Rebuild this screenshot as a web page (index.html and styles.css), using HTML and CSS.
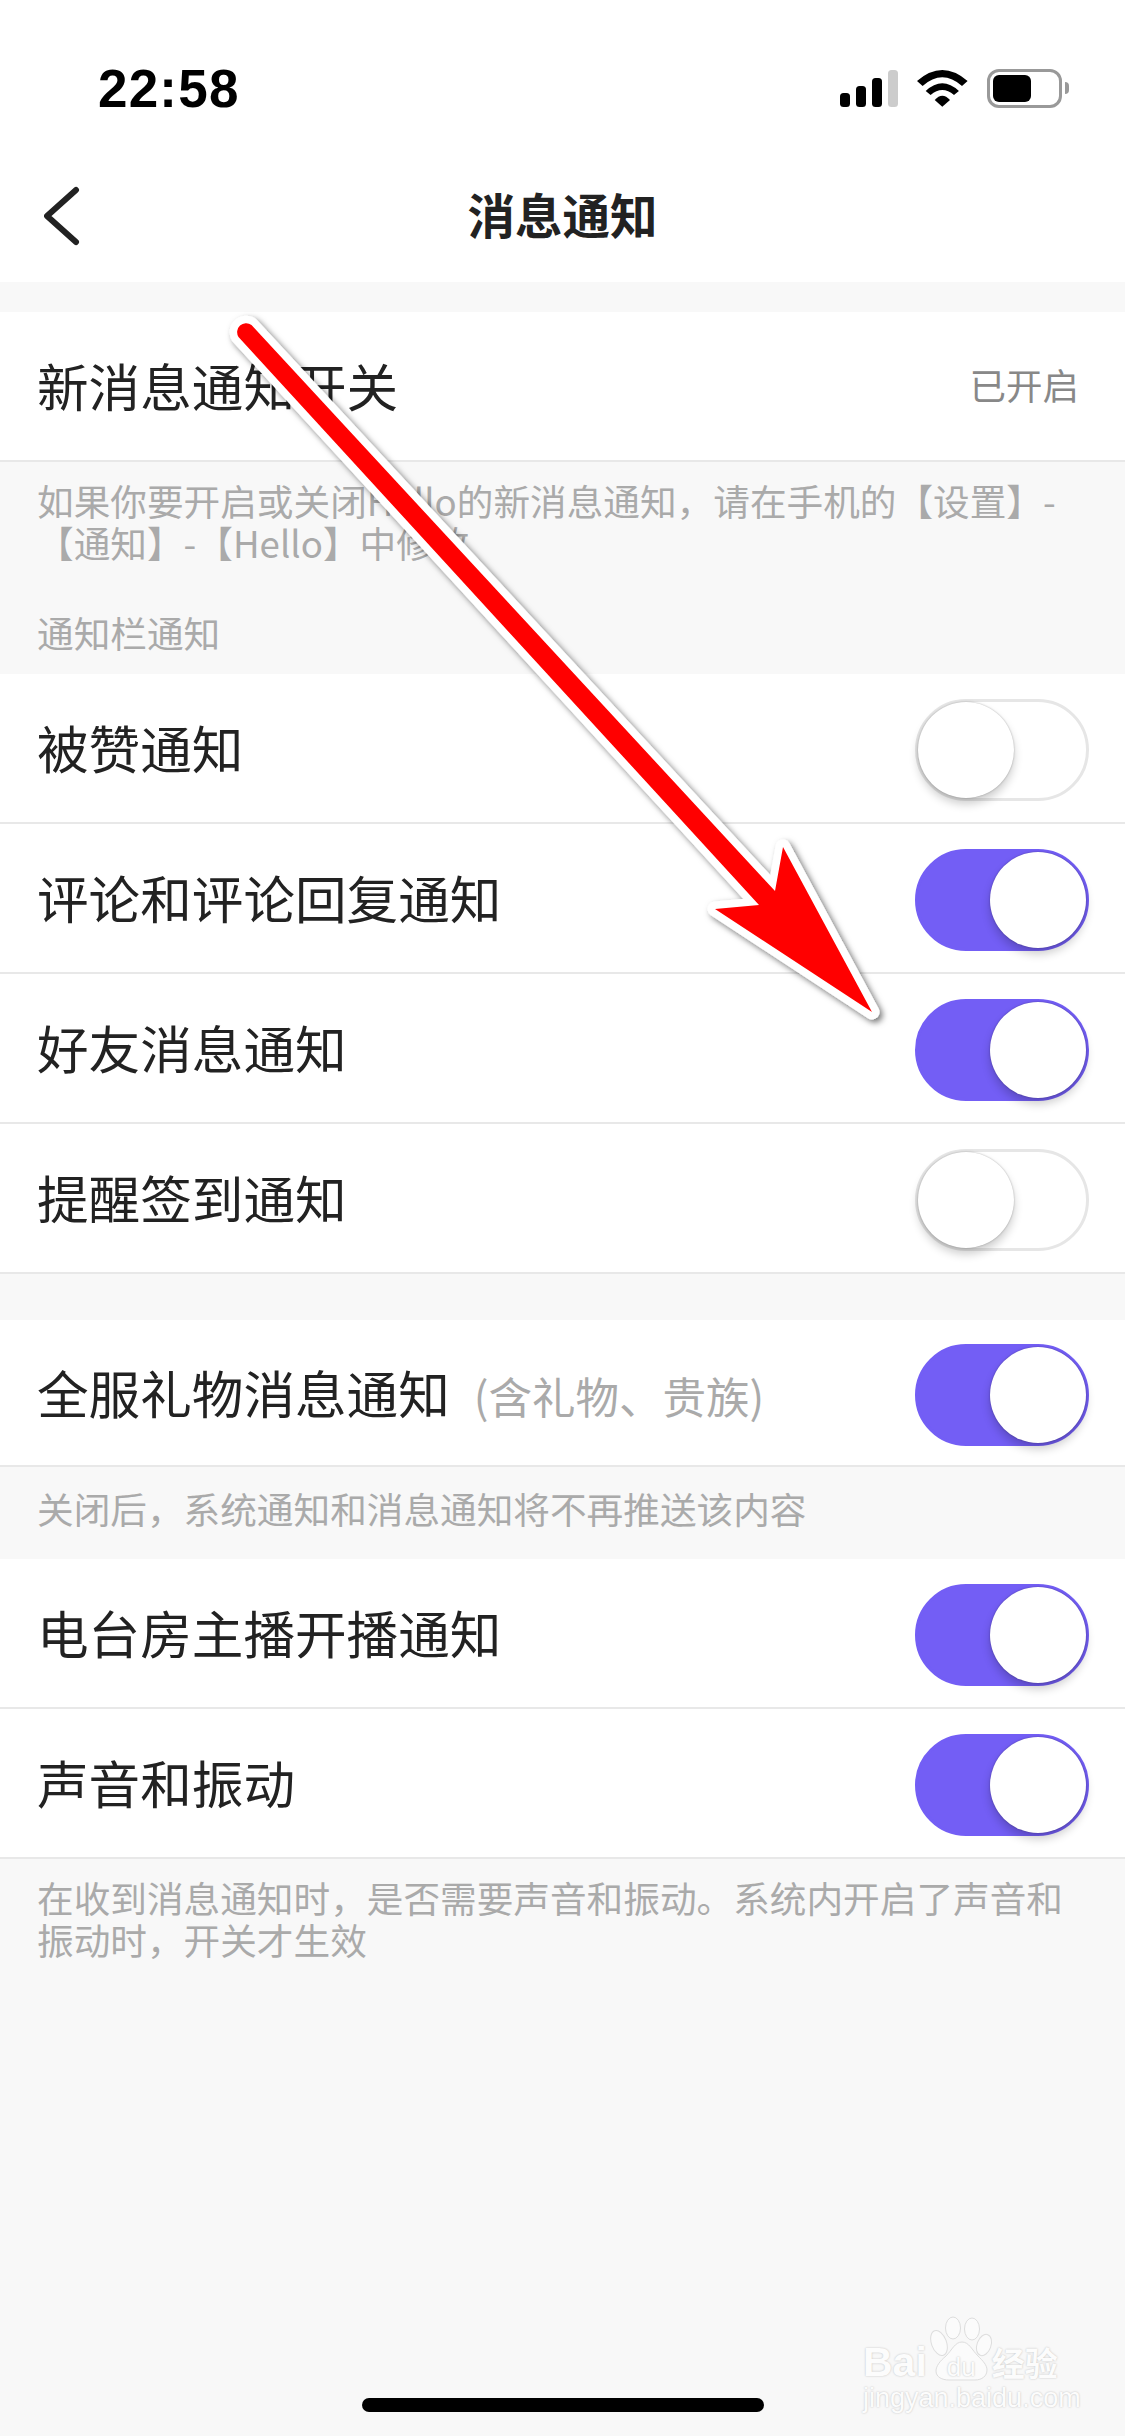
FILE: index.html
```html
<!DOCTYPE html>
<html lang="zh-CN">

<head>
  <meta charset="UTF-8">
  <title>消息通知</title>
  <link rel="stylesheet" href="styles.css">
</head>

<body>

  <div class="status">
    <span class="time">22:58</span>
    <div class="status-icons">
      <svg width="58" height="37" viewBox="0 0 58 37">
        <rect x="0" y="23" width="10" height="14" rx="3.5"/>
        <rect x="16" y="16" width="10" height="21" rx="3.5"/>
        <rect x="32" y="8" width="10" height="29" rx="3.5"/>
        <rect x="48" y="0" width="10" height="37" rx="3.5" fill="#ccc"/>
      </svg>
      <svg width="51" height="37" viewBox="0 0 51 37">
        <path d="M0 11Q25.3 -11 50.6 11L45 16Q25.3 -1.4 5.6 16Z"/>
        <path d="M8.7 21Q25.3 5.6 41.9 21L37 25Q25.3 15 13.6 25Z"/>
        <path d="M17.7 30Q25.3 21.4 33 30L25.3 36.7Z"/>
      </svg>
      <div class="battery"><div class="battery-level"></div></div>
    </div>
  </div>

  <header class="nav">
    <svg class="back" width="36" height="60" viewBox="0 0 36 60">
      <path d="M32 4L3 30L32 56"/>
    </svg>
    <h1>消息通知</h1>
  </header>

  <main>
    <div class="row first">
      <span class="label">新消息通知开关</span>
      <span class="state">已开启</span>
    </div>
    <p class="note note-top">如果你要开启或关闭Hello的新消息通知，请在手机的【设置】-<br>【通知】-【Hello】中修改</p>
    <p class="section">通知栏通知</p>

    <div class="row"><span class="label">被赞通知</span><span class="toggle"></span></div>
    <div class="row"><span class="label">评论和评论回复通知</span><span class="toggle on"></span></div>
    <div class="row"><span class="label">好友消息通知</span><span class="toggle on"></span></div>
    <div class="row"><span class="label">提醒签到通知</span><span class="toggle"></span></div>

    <div class="row gap">
      <span class="label">全服礼物消息通知<small>(含礼物、贵族)</small></span>
      <span class="toggle on"></span>
    </div>
    <p class="note note-single">关闭后，系统通知和消息通知将不再推送该内容</p>

    <div class="row"><span class="label">电台房主播开播通知</span><span class="toggle on"></span></div>
    <div class="row"><span class="label">声音和振动</span><span class="toggle on"></span></div>
    <p class="note note-last">在收到消息通知时，是否需要声音和振动。系统内开启了声音和<br>振动时，开关才生效</p>
  </main>

  <div class="home-bar"></div>

  <!-- annotation drawn over the page -->
  <svg class="arrow" width="1125" height="1100" viewBox="0 0 1125 1100">
    <defs>
      <filter id="arrow-shadow" x="-10%" y="-10%" width="120%" height="120%">
        <feDropShadow dx="3" dy="3" stdDeviation="3" flood-color="#000" flood-opacity="0.55"/>
      </filter>
    </defs>
    <path filter="url(#arrow-shadow)" d="M238.5 337A9 9 0 0 1 251.5 325L775 891L783 847L872 1012L715 909L759 905Z"/>
  </svg>

  <div class="mark">
    <svg class="paw" width="64" height="66" viewBox="0 0 64 66">
      <ellipse cx="9" cy="27" rx="7.5" ry="13" transform="rotate(-20 9 27)"/>
      <ellipse cx="23" cy="12" rx="7.5" ry="11"/>
      <ellipse cx="42" cy="13" rx="7.5" ry="11"/>
      <ellipse cx="54" cy="29" rx="7" ry="11" transform="rotate(20 54 29)"/>
      <path d="M32 26C25 26 22 34 16 40C10 45 6 50 6 55C6 61 12 64 19 64L45 64C52 64 57 60 57 54C57 49 53 45 48 40C42 34 39 26 32 26Z"/>
    </svg>
    <div class="mark-top"><span class="mark-bai">Bai</span><span class="mark-du">du</span><span class="mark-cn">经验</span></div>
    <div class="mark-url">jingyan.baidu.com</div>
  </div>

</body>

</html>
```

FILE: styles.css
```css
html {
  background: #f8f8f8;
}

body {
  color: #222;
  font-family: "Noto Sans CJK SC", "Liberation Sans", sans-serif;
  height: 2436px;
  margin: 0;
  overflow: hidden;
  position: relative;
  width: 1125px;
}

.status {
  align-items: center;
  background: #fff;
  box-sizing: border-box;
  display: flex;
  height: 150px;
  justify-content: space-between;
  padding: 26px 56px 0 98px;
}

.time {
  color: #000;
  font-family: "Liberation Sans", sans-serif;
  font-size: 53px;
  font-weight: 700;
  letter-spacing: 1.2px;
}

.status-icons {
  align-items: center;
  display: flex;
  gap: 19px;
}

.status-icons svg {
  display: block;
}

.battery {
  border: 3px solid #999;
  border-radius: 12px;
  box-sizing: border-box;
  height: 39px;
  margin-right: 7px;
  padding: 3px;
  position: relative;
  width: 75px;
}

.battery::after {
  background: #999;
  border-radius: 0 5px 5px 0;
  content: "";
  height: 12px;
  position: absolute;
  right: -10px;
  top: 10px;
  width: 4px;
}

.battery-level {
  background: #000;
  border-radius: 6px;
  height: 100%;
  width: 38px;
}

.nav {
  align-items: center;
  background: #fff;
  display: grid;
  grid-template-columns: 1fr auto 1fr;
  height: 132px;
}

.nav h1 {
  font-size: 47.5px;
  font-weight: 700;
  margin: 0 0 6px;
}

.back {
  margin-left: 44px;
}

.back path {
  fill: none;
  stroke: #222;
  stroke-linecap: round;
  stroke-linejoin: round;
  stroke-width: 6px;
}

main {
  padding-top: 30px;
}

.row {
  align-items: center;
  background: #fff;
  border-bottom: 2px solid #e8e8e8;
  box-sizing: border-box;
  display: flex;
  height: 150px;
  justify-content: space-between;
  padding: 0 36px 0 37px;
}

.row.first {
  padding-right: 46px;
}

.row.gap {
  height: 147px;
  margin-top: 46px;
}

.label {
  font-size: 51.6px;
  margin-bottom: 3px;
}

.label small {
  color: #aaa;
  font-size: 43.5px;
  margin-left: 24px;
}

.state {
  color: #888;
  font-size: 36.5px;
  margin-bottom: 3px;
}

.note {
  color: #aaa;
  font-size: 36.65px;
  line-height: 42px;
  margin: 0;
  padding: 20px 37px 0;
}

.note-top {
  padding-top: 17px;
}

.note-single {
  box-sizing: border-box;
  height: 92px;
  padding-top: 20px;
}

.note-last {
  padding-top: 17px;
}

.section {
  box-sizing: border-box;
  color: #aaa;
  font-size: 36.65px;
  height: 111px;
  line-height: 42px;
  margin: 0;
  padding: 48px 37px 0;
}

.toggle {
  background: #fff;
  border: 3px solid #e6e6e6;
  border-radius: 51px;
  box-sizing: border-box;
  display: block;
  height: 102px;
  margin-top: 4px;
  position: relative;
  width: 174px;
}

.toggle::after {
  background: #fff;
  border-radius: 50%;
  box-shadow: 0 0 2px rgba(0, 0, 0, .3), 0 6px 10px rgba(0, 0, 0, .2);
  content: "";
  height: 96px;
  left: 0;
  position: absolute;
  top: 0;
  width: 96px;
}

.toggle.on {
  background: #735ef5;
  border-color: #735ef5;
}

.toggle.on::after {
  left: 72px;
}

.home-bar {
  background: #000;
  border-radius: 8px;
  bottom: 24px;
  height: 14px;
  left: 362px;
  position: absolute;
  width: 402px;
}

.arrow {
  left: 0;
  position: absolute;
  top: 0;
}

.arrow path {
  fill: #f00;
  paint-order: stroke;
  stroke: #fff;
  stroke-linejoin: round;
  stroke-width: 15px;
}

.mark {
  color: #fcfcfc;
  font-family: "Liberation Sans", sans-serif;
  left: 863px;
  position: absolute;
  text-shadow: 0 0 2px #bbb;
  top: 2344px;
  white-space: nowrap;
}

.mark-top {
  align-items: baseline;
  display: flex;
  height: 36px;
  line-height: 36px;
  position: relative;
}

.mark-bai {
  font-size: 41px;
  font-weight: 700;
}

.mark-du {
  font-size: 26px;
  margin: 0 16px 0 20px;
}

.mark-cn {
  font-family: "Noto Sans CJK SC", sans-serif;
  font-size: 33px;
  font-weight: 700;
}

.mark-url {
  font-size: 27px;
  line-height: 36px;
}

.paw {
  fill: #fbfbfb;
  left: 67px;
  position: absolute;
  stroke: #ddd;
  stroke-width: 1px;
  top: -28px;
}
```
